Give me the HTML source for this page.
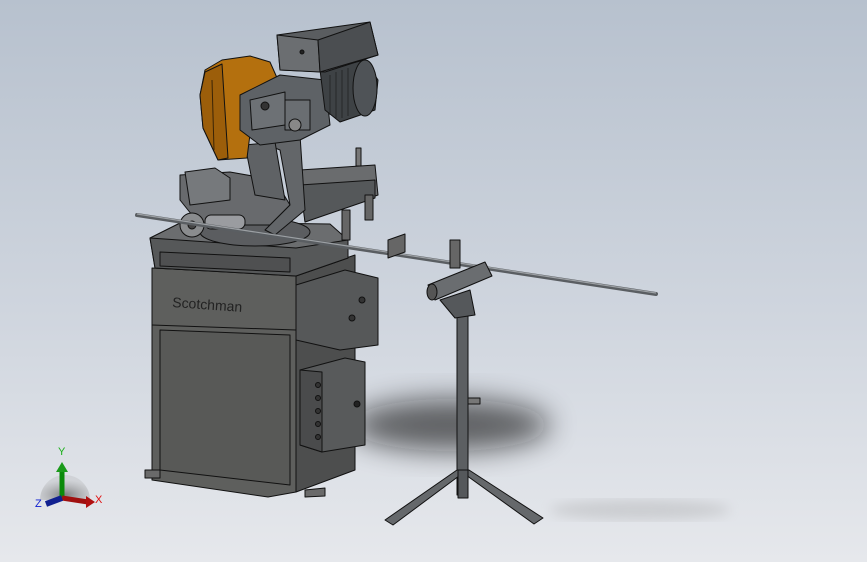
<!DOCTYPE html>
<html><head><meta charset="utf-8"><style>
html,body{margin:0;padding:0;width:867px;height:562px;overflow:hidden}
body{background:linear-gradient(180deg,#b7c1ce 0%,#cfd5de 55%,#e6e8ec 100%)}
svg{position:absolute;left:0;top:0}
text{font-family:"Liberation Sans",sans-serif}
</style></head><body>
<svg width="867" height="562" viewBox="0 0 867 562">
<defs>
<filter id="b" x="-50%" y="-50%" width="200%" height="200%"><feGaussianBlur stdDeviation="14"/></filter>
<filter id="b2"><feGaussianBlur stdDeviation="6"/></filter>
<radialGradient id="ax" cx="0.5" cy="0.8" r="0.6"><stop offset="0" stop-color="#555"/><stop offset="1" stop-color="#999" stop-opacity="0.3"/></radialGradient>
</defs>
<g stroke="#111" stroke-width="1" stroke-linejoin="round">
<ellipse cx="450" cy="425" rx="100" ry="26" fill="#111" opacity="0.6" filter="url(#b)" stroke="none"/>
<ellipse cx="640" cy="510" rx="90" ry="10" fill="#999" opacity="0.3" filter="url(#b2)" stroke="none"/>
<polygon points="152,268 296,275 296,492 268,497 152,480" fill="#5e5f5d"/>
<polygon points="296,275 355,255 355,470 296,492" fill="#4d4e4e"/>
<polygon points="160,330 290,335 290,485 160,470" fill="#585957"/>
<line x1="152" y1="325" x2="296" y2="330"/>
<polygon points="145,470 160,470 160,478 145,478" fill="#6a6a6a"/>
<polygon points="305,490 325,488 325,496 305,497" fill="#6a6a6a"/>
<text x="172" y="307" font-size="14" fill="#222" stroke="none" transform="rotate(4 172 307)">Scotchman</text>
<polygon points="150,238 182,222 330,224 348,240 348,258 296,276 155,268" fill="#6b6d6f"/>
<polygon points="150,238 296,248 348,240 348,258 296,276 155,268" fill="#565859"/>
<polygon points="160,252 290,258 290,272 160,266" fill="#4f5051"/>
<polygon points="300,170 375,165 378,195 305,222" fill="#6a6c6e"/>
<polygon points="300,185 375,180 375,198 305,222" fill="#55585a"/>
<rect x="365" y="195" width="8" height="25" fill="#666"/>
<rect x="342" y="210" width="8" height="30" fill="#666"/>
<rect x="356" y="148" width="5" height="18" fill="#777"/>
<polygon points="296,285 345,270 378,278 378,345 340,350 296,340" fill="#565859"/>
<circle cx="362" cy="300" r="3" fill="#333"/><circle cx="352" cy="318" r="3" fill="#333"/>
<polygon points="300,370 345,358 365,362 365,445 322,452 300,445" fill="#585a5b"/>
<polygon points="300,370 322,372 322,452 300,445" fill="#4a4b4c"/>
<circle cx="357" cy="404" r="3" fill="#222"/>
<g fill="#333"><circle cx="318" cy="385" r="2.5"/><circle cx="318" cy="398" r="2.5"/><circle cx="318" cy="411" r="2.5"/><circle cx="318" cy="424" r="2.5"/><circle cx="318" cy="437" r="2.5"/></g>
<ellipse cx="255" cy="232" rx="55" ry="14" fill="#5b5d60"/>
<polygon points="180,175 230,172 275,180 290,205 270,225 200,225 180,200" fill="#686a6d"/>
<polygon points="185,172 215,168 230,178 230,200 190,205" fill="#76797c"/>
<circle cx="192" cy="225" r="12" fill="#8a8c8e"/><circle cx="192" cy="225" r="4" fill="#444"/>
<rect x="205" y="215" width="40" height="14" rx="6" fill="#9a9ca0"/>
<polygon points="255,140 300,135 305,210 275,235 265,230 290,205 280,150" fill="#636669"/>
<polygon points="245,145 275,142 285,200 255,195" fill="#5f6265"/>
<polygon points="205,70 222,60 250,56 270,62 278,80 255,95 247,158 218,160 203,128 200,95" fill="#b4700e"/>
<polygon points="205,72 222,64 228,158 218,160 203,128 200,95" fill="#9c5e0a"/>
<line x1="212" y1="80" x2="214" y2="150" stroke="#3a2406"/>
<polygon points="240,95 280,75 325,80 330,125 300,140 260,145 240,130" fill="#5e6266"/>
<polygon points="250,100 285,92 285,125 252,130" fill="#6d7175"/>
<circle cx="265" cy="106" r="4" fill="#333"/>
<rect x="285" y="100" width="25" height="30" fill="#6a6e72"/>
<circle cx="295" cy="125" r="6" fill="#888"/>
<polygon points="320,70 365,60 378,80 375,110 340,122 325,110" fill="#3e4245"/>
<ellipse cx="365" cy="88" rx="12" ry="28" fill="#4f5357"/>
<g stroke="#222" stroke-width="0.8"><line x1="330" y1="75" x2="330" y2="115"/><line x1="336" y1="72" x2="336" y2="118"/><line x1="342" y1="70" x2="342" y2="118"/><line x1="348" y1="68" x2="348" y2="116"/></g>
<polygon points="277,35 370,22 378,55 325,72 280,70" fill="#5a5d60"/>
<polygon points="277,35 318,40 320,72 280,70" fill="#6b6e71"/>
<polygon points="318,40 370,22 378,55 320,72" fill="#4b4e51"/>
<circle cx="302" cy="52" r="2" fill="#222"/>
<line x1="137" y1="215" x2="656" y2="294" stroke="#5a5e62" stroke-width="4" stroke-linecap="round"/>
<line x1="137" y1="214" x2="656" y2="293" stroke="#9ca0a4" stroke-width="1.2"/>
<polygon points="388,240 405,234 405,252 388,258" fill="#666"/>
<rect x="450" y="240" width="10" height="28" fill="#666"/>
<rect x="457" y="300" width="11" height="195" fill="#5c5f62"/>
<rect x="468" y="398" width="12" height="6" fill="#777"/>
<polygon points="428,285 485,262 492,276 435,300" fill="#6a6d70"/>
<ellipse cx="432" cy="292" rx="5" ry="8" fill="#555"/>
<polygon points="440,300 470,290 475,315 455,318" fill="#55585b"/>
<polygon points="457,470 467,470 393,525 385,520" fill="#65686b"/>
<polygon points="459,470 469,470 543,518 534,524" fill="#65686b"/>
<rect x="458" y="470" width="10" height="28" fill="#55585b"/>
</g>
<path d="M40,500 A25,25 0 0 1 90,500 Z" fill="url(#ax)" opacity="0.7"/>
<line x1="62" y1="498" x2="62" y2="470" stroke="#0a8a0a" stroke-width="5"/>
<polygon points="56,472 68,472 62,462" fill="#1a9a1a"/>
<line x1="62" y1="498" x2="88" y2="502" stroke="#a01010" stroke-width="5"/>
<polygon points="86,496 86,508 95,502" fill="#b01010"/>
<line x1="62" y1="498" x2="46" y2="504" stroke="#102090" stroke-width="6"/>
<text x="58" y="455" font-size="11" fill="#1ab01a">Y</text>
<text x="95" y="503" font-size="11" fill="#e01010">X</text>
<text x="35" y="507" font-size="11" fill="#1020d0">Z</text>
</svg>
</body></html>
